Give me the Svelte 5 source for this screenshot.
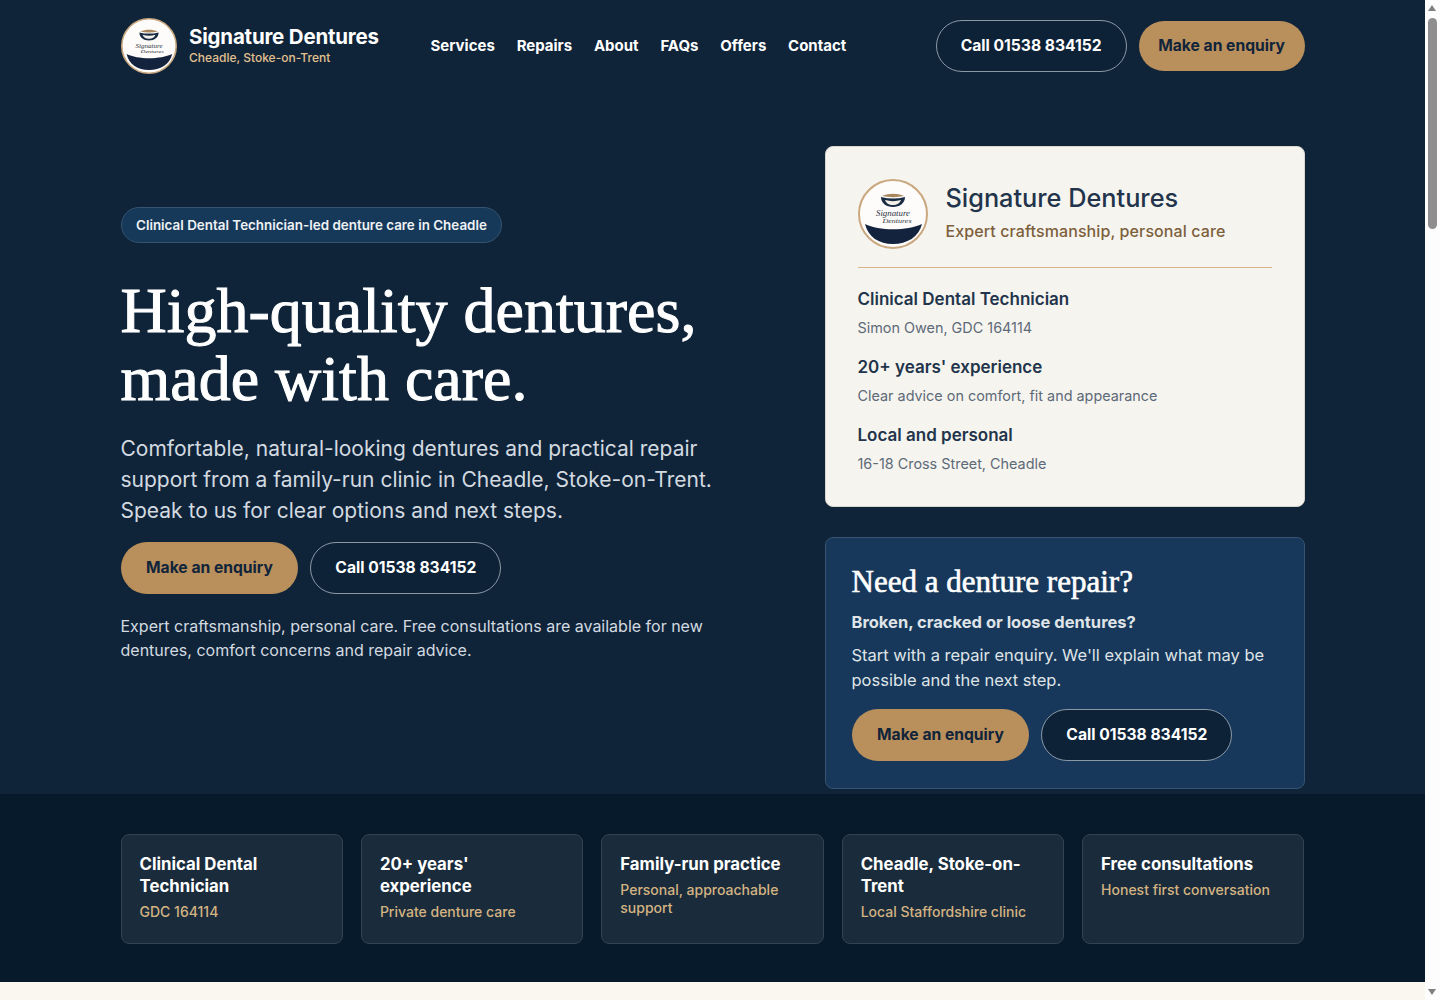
<script>
	const links = ['Services', 'Repairs', 'About', 'FAQs', 'Offers', 'Contact']
	const facts = [
		{ title: 'Clinical Dental Technician', note: 'Simon Owen, GDC 164114' },
		{ title: "20+ years' experience", note: 'Clear advice on comfort, fit and appearance' },
		{ title: 'Local and personal', note: '16-18 Cross Street, Cheadle' }
	]
	const trust = [
		{ title: 'Clinical Dental Technician', note: 'GDC 164114' },
		{ title: "20+ years' experience", note: 'Private denture care' },
		{ title: 'Family-run practice', note: 'Personal, approachable support' },
		{ title: 'Cheadle, Stoke-on-Trent', note: 'Local Staffordshire clinic' },
		{ title: 'Free consultations', note: 'Honest first conversation' }
	]
</script>

{#snippet logo(size)}
	<svg class="logo" width={size} height={size} viewBox="0 0 70 70" aria-hidden="true">
		<circle cx="35" cy="35" r="34" fill="#fdfcfa" stroke="#c9a77f" stroke-width="2" />
		<path d="M23 18c8 2 16 2 24 0 0 6-5 10-12 10s-12-4-12-10z" fill="#1a2c44" />
		<path d="M27 21c5 1.500 11 1.500 16 0-1 3-4 5-8 5s-7-2-8-5z" fill="#f4f1ea" />
		<path d="M24 17c7-3 15-3 22 0-7 1.500-15 1.500-22 0z" fill="#a9865c" />
		<text x="35" y="37" text-anchor="middle" class="script" textLength="34" lengthAdjust="spacingAndGlyphs">Signature</text>
		<text x="39" y="44" text-anchor="middle" class="script small" textLength="29" lengthAdjust="spacingAndGlyphs">Dentures</text>
		<path d="M7 45c14 7 42 7 57 0-3 13-15 20-29 20S10 58 7 45z" fill="#14233d" />
	</svg>
{/snippet}

{#snippet actions()}
	<div class="actions">
		<a class="btn gold" href="#enquiry">Make an enquiry</a>
		<a class="btn ghost" href="#call">Call 01538 834152</a>
	</div>
{/snippet}

<div class="page">
	<div class="hero">
		<header class="wrap top">
			<a class="brand" href="#home">
				{@render logo(56)}
				<span class="brand-text">
					<strong>Signature Dentures</strong>
					<small>Cheadle, Stoke-on-Trent</small>
				</span>
			</a>
			<nav>
				{#each links as link}
					<a href="#{link}">{link}</a>
				{/each}
			</nav>
			<div class="top-actions">
				<a class="btn ghost" href="#call">Call 01538 834152</a>
				<a class="btn gold slim" href="#enquiry">Make an enquiry</a>
			</div>
		</header>

		<main class="wrap columns">
			<section class="intro">
				<span class="pill">Clinical Dental Technician-led denture care in Cheadle</span>
				<h1>High-quality dentures, made with care.</h1>
				<p class="lead">
					Comfortable, natural-looking dentures and practical repair support from a family-run clinic in Cheadle, Stoke-on-Trent. Speak to us for clear options and next steps.
				</p>
				{@render actions()}
				<p class="small-print">
					Expert craftsmanship, personal care. Free consultations are available for new dentures, comfort concerns and repair advice.
				</p>
			</section>

			<aside class="side">
				<div class="card">
					<div class="card-head">
						{@render logo(70)}
						<div class="card-title">
							<h2>Signature Dentures</h2>
							<p>Expert craftsmanship, personal care</p>
						</div>
					</div>
					<dl>
						{#each facts as fact}
							<dt>{fact.title}</dt>
							<dd>{fact.note}</dd>
						{/each}
					</dl>
				</div>
				<div class="repair">
					<h3>Need a denture repair?</h3>
					<p class="repair-sub">Broken, cracked or loose dentures?</p>
					<p class="repair-body">Start with a repair enquiry. We'll explain what may be possible and the next step.</p>
					{@render actions()}
				</div>
			</aside>
		</main>
	</div>

	<section class="strip">
		<div class="wrap trust">
			{#each trust as item}
				<div class="tile">
					<strong>{item.title}</strong>
					<span>{item.note}</span>
				</div>
			{/each}
		</div>
	</section>

	<div class="rest"></div>
</div>

<!-- window scrollbar as it shows in the reference -->
<div class="scrollbar" aria-hidden="true">
	<span class="arrow up"></span>
	<span class="thumb"></span>
	<span class="arrow down"></span>
</div>

<style>
	:global(body) {
		margin: 0;
		background: #faf6f0;
	}

	.page {
		margin-right: 15px;
		font-family: Inter, 'Liberation Sans', sans-serif;
		color: #fff;
	}

	a {
		text-decoration: none;
		color: inherit;
	}

	.wrap {
		width: 1184px;
		margin: 0 auto;
	}

	.hero {
		background: #0f2439;
		height: 794px;
		overflow: hidden;
	}

	.top {
		display: flex;
		align-items: center;
		height: 91px;
	}

	.brand {
		display: flex;
		align-items: center;
		gap: 12px;
		width: 310px;
	}

	.logo {
		display: block;
		flex: none;
	}

	.script {
		font-family: 'Liberation Serif', serif;
		font-style: italic;
		font-size: 8px;
		fill: #2a3242;
	}

	.script.small {
		font-size: 6px;
	}

	.brand-text {
		display: flex;
		flex-direction: column;
		margin: 0 0 3px 0.500px;
	}

	.brand-text strong {
		font-size: 20.500px;
		font-weight: 700;
		line-height: 26px;
		letter-spacing: -0.2px;
	}

	.brand-text small {
		font-size: 12px;
		font-weight: 500;
		line-height: 15px;
		color: #e3c08f;
	}

	nav {
		display: flex;
		gap: 21.800px;
		font-size: 15px;
		font-weight: 700;
	}

	.top-actions {
		display: flex;
		align-items: center;
		gap: 12px;
		margin-left: auto;
	}

	.btn {
		display: inline-flex;
		align-items: center;
		justify-content: center;
		box-sizing: border-box;
		height: 52px;
		padding: 0 24px;
		border-radius: 26px;
		font-size: 15.650px;
		font-weight: 700;
		white-space: nowrap;
	}

	.actions .btn {
		padding-bottom: 2px;
	}

	.gold {
		background: #b98f5c;
		color: #10243a;
	}

	.actions .gold {
		padding-left: 25.500px;
		padding-right: 25.500px;
	}

	.gold.slim {
		height: 50px;
		padding: 0 19.500px;
	}

	.ghost {
		background: #0d2237;
		border: 1px solid #8a99a8;
		color: #fff;
	}

	.columns {
		display: grid;
		grid-template-columns: 1fr 480px;
		column-gap: 48px;
		padding-top: 55px;
	}

	.intro {
		padding-top: 61px;
	}

	.pill {
		display: inline-block;
		box-sizing: border-box;
		height: 36px;
		padding: 0 14.500px;
		line-height: 34px;
		border: 1px solid #36536f;
		border-radius: 18px;
		background: #16395a;
		font-size: 13.420px;
		font-weight: 600;
		color: #eef2f5;
	}

	h1 {
		margin: 34px 0 0;
		width: 640px;
		font-family: 'Liberation Serif', serif;
		font-size: 64px;
		font-weight: 400;
		line-height: 68px;
		-webkit-text-stroke: 1px #fff;
	}

	.lead {
		margin: 20px 0 16px;
		width: 600px;
		font-size: 21px;
		line-height: 31px;
		color: #d3dae0;
	}

	.actions {
		display: flex;
		gap: 12px;
	}

	.small-print {
		margin: 20px 0 0;
		width: 600px;
		font-size: 16px;
		line-height: 24px;
		color: #d3dae0;
	}

	.side {
		display: flex;
		flex-direction: column;
		gap: 30px;
	}

	.card {
		box-sizing: border-box;
		height: 361px;
		padding: 32px;
		background: #f6f4ef;
		border: 1px solid #d9d6d0;
		border-radius: 8px;
		color: #22344b;
	}

	.card-head {
		display: flex;
		align-items: center;
		gap: 18px;
		padding-bottom: 18px;
		border-bottom: 1px solid #d8b48a;
	}

	.card-title {
		margin-bottom: 5px;
	}

	.card-head h2 {
		margin: 0 0 4px;
		font-size: 25.300px;
		font-weight: 500;
		line-height: 34px;
	}

	.card-head p {
		margin: 2px 0 0;
		font-size: 16px;
		font-weight: 500;
		line-height: 24px;
		letter-spacing: 0.1px;
		color: #7d5f3c;
	}

	dl {
		margin: 18px 0 0;
	}

	dt {
		font-size: 17px;
		font-weight: 600;
		line-height: 26px;
		color: #22344b;
	}

	dd {
		margin: 3px 0 13px;
		font-size: 14.400px;
		line-height: 26px;
		color: #5d6a78;
	}

	.repair {
		box-sizing: border-box;
		height: 252px;
		padding: 26px 26px 0;
		background: #17385a;
		border: 1px solid #36536f;
		border-radius: 8px;
	}

	h3 {
		margin: 0;
		font-family: 'Liberation Serif', serif;
		font-size: 31px;
		font-weight: 400;
		line-height: 36px;
		-webkit-text-stroke: 0.6px #fff;
	}

	.repair-sub {
		margin: 10px 0 0;
		font-size: 16.500px;
		font-weight: 700;
		line-height: 24px;
		color: #dfe4e8;
	}

	.repair-body {
		margin: 9px 0 16px;
		font-size: 16.500px;
		line-height: 25px;
		color: #dfe4e8;
	}

	.strip {
		background: #061a2b;
		height: 188px;
		box-sizing: border-box;
		padding-top: 40px;
	}

	.trust {
		display: grid;
		grid-template-columns: repeat(5, 1fr);
		gap: 18px;
	}

	.tile {
		box-sizing: border-box;
		height: 110px;
		padding: 18px;
		display: flex;
		flex-direction: column;
		gap: 6px;
		background: #1a2c3c;
		border: 1px solid #33434f;
		border-radius: 8px;
	}

	.tile strong {
		font-size: 16.800px;
		font-weight: 700;
		line-height: 22px;
	}

	.tile span {
		font-size: 14px;
		font-weight: 500;
		line-height: 18px;
		color: #d4b382;
	}

	.rest {
		height: 400px;
		background: #faf6f0;
	}

	.scrollbar {
		position: fixed;
		top: 0;
		right: 0;
		bottom: 0;
		width: 15px;
		background: #fdfdfd;
	}

	.thumb {
		position: absolute;
		top: 18px;
		left: 3px;
		width: 9px;
		height: 211px;
		border-radius: 5px;
		background: #8f8d8d;
	}

	.arrow {
		position: absolute;
		left: 3px;
		border-left: 4.500px solid transparent;
		border-right: 4.500px solid transparent;
	}

	.arrow.up {
		top: 5px;
		border-bottom: 6px solid #7f7f7f;
	}

	.arrow.down {
		bottom: 5px;
		border-top: 6px solid #7f7f7f;
	}
</style>
